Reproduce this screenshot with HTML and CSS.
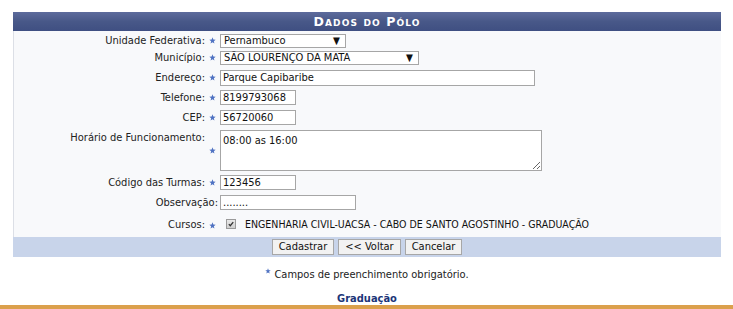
FILE: index.html
```html
<!DOCTYPE html>
<html lang="pt-BR">
<head>
<meta charset="utf-8">
<title>Dados do Pólo</title>
<link rel="stylesheet" href="styles.css">
</head>
<body>
<div class="page">
  <form class="form-box">
    <div class="caption">Dados do Pólo</div>
    <div class="fields">
      <label class="lbl">Unidade Federativa:</label>
      <span class="req"><svg viewBox="0 0 10 10"><path d="M5 0.5 6.2 3.6 9.5 3.8 6.9 5.9 7.8 9.2 5 7.4 2.2 9.2 3.1 5.9 0.5 3.8 3.8 3.6Z"/></svg></span>
      <div class="ctl"><span class="select w-uf"><span>Pernambuco</span><span class="arrow">▼</span></span></div>

      <label class="lbl">Município:</label>
      <span class="req"><svg viewBox="0 0 10 10"><path d="M5 0.5 6.2 3.6 9.5 3.8 6.9 5.9 7.8 9.2 5 7.4 2.2 9.2 3.1 5.9 0.5 3.8 3.8 3.6Z"/></svg></span>
      <div class="ctl"><span class="select w-mun"><span>SÃO LOURENÇO DA MATA</span><span class="arrow">▼</span></span></div>

      <label class="lbl">Endereço:</label>
      <span class="req"><svg viewBox="0 0 10 10"><path d="M5 0.5 6.2 3.6 9.5 3.8 6.9 5.9 7.8 9.2 5 7.4 2.2 9.2 3.1 5.9 0.5 3.8 3.8 3.6Z"/></svg></span>
      <div class="ctl"><input class="txt w-end tall" type="text" value="Parque Capibaribe"></div>

      <label class="lbl">Telefone:</label>
      <span class="req"><svg viewBox="0 0 10 10"><path d="M5 0.5 6.2 3.6 9.5 3.8 6.9 5.9 7.8 9.2 5 7.4 2.2 9.2 3.1 5.9 0.5 3.8 3.8 3.6Z"/></svg></span>
      <div class="ctl"><input class="txt w-sm" type="text" value="8199793068"></div>

      <label class="lbl">CEP:</label>
      <span class="req"><svg viewBox="0 0 10 10"><path d="M5 0.5 6.2 3.6 9.5 3.8 6.9 5.9 7.8 9.2 5 7.4 2.2 9.2 3.1 5.9 0.5 3.8 3.8 3.6Z"/></svg></span>
      <div class="ctl"><input class="txt w-sm" type="text" value="56720060"></div>

      <label class="lbl top">Horário de Funcionamento:</label>
      <span class="req"><svg viewBox="0 0 10 10"><path d="M5 0.5 6.2 3.6 9.5 3.8 6.9 5.9 7.8 9.2 5 7.4 2.2 9.2 3.1 5.9 0.5 3.8 3.8 3.6Z"/></svg></span>
      <div class="ctl"><textarea class="area">08:00 as 16:00</textarea></div>

      <label class="lbl">Código das Turmas:</label>
      <span class="req"><svg viewBox="0 0 10 10"><path d="M5 0.5 6.2 3.6 9.5 3.8 6.9 5.9 7.8 9.2 5 7.4 2.2 9.2 3.1 5.9 0.5 3.8 3.8 3.6Z"/></svg></span>
      <div class="ctl"><input class="txt w-sm" type="text" value="123456"></div>

      <label class="lbl obs">Observação:</label>
      <div class="ctl"><input class="txt w-obs" type="text" value="........"></div>

      <label class="lbl">Cursos:</label>
      <span class="req cursos-req"><svg viewBox="0 0 10 10"><path d="M5 0.5 6.2 3.6 9.5 3.8 6.9 5.9 7.8 9.2 5 7.4 2.2 9.2 3.1 5.9 0.5 3.8 3.8 3.6Z"/></svg></span>
      <div class="ctl cursos-ctl">
        <span class="check"><svg viewBox="0 0 10 10"><path d="M2.3 5.2 4.1 7.2 7.8 2.6" /></svg></span>
        <span class="curso">ENGENHARIA CIVIL-UACSA - CABO DE SANTO AGOSTINHO - GRADUAÇÃO</span>
      </div>
    </div>
    <div class="actions">
      <button type="button" class="btn">Cadastrar</button>
      <button type="button" class="btn">&lt;&lt; Voltar</button>
      <button type="button" class="btn">Cancelar</button>
    </div>
  </form>
  <p class="note"><span class="req small"><svg viewBox="0 0 10 10"><path d="M5 0.5 6.2 3.6 9.5 3.8 6.9 5.9 7.8 9.2 5 7.4 2.2 9.2 3.1 5.9 0.5 3.8 3.8 3.6Z"/></svg></span>Campos de preenchimento obrigatório.</p>
  <h2 class="section">Graduação</h2>
</div>
<div class="rule"></div>
</body>
</html>
```

FILE: styles.css
```css
html, body {
  margin: 0;
  padding: 0;
  background: #ffffff;
}
body {
  font-family: "DejaVu Sans Condensed", "DejaVu Sans", sans-serif;
  font-stretch: condensed;
  font-size: 11px;
  color: #222;
  width: 733px;
  height: 309px;
  overflow: hidden;
}
.page {
  padding: 12px 12px 0 13px;
}
.form-box {
  width: 708px;
  margin: 0;
}
.caption {
  height: 19px;
  line-height: 20px;
  background: linear-gradient(#5d6b9c, #485888 50%, #3f4f82);
  color: #fff;
  font-family: "DejaVu Sans", sans-serif;
  font-stretch: normal;
  font-weight: bold;
  font-variant: small-caps;
  font-size: 12.5px;
  letter-spacing: 1.1px;
  text-align: center;
}
.fields {
  background: #f8f9fb;
  border-left: 1px solid #dcdfe6;
  display: grid;
  grid-template-columns: 191px 15px 1fr;
  grid-template-rows: 17px 17px 23px 16px 24px 42px 22px 18px 26px;
  padding: 1px 0 0;
  align-items: center;
}
.lbl {
  text-align: right;
  white-space: nowrap;
  color: #222;
}
.lbl.top {
  align-self: start;
  padding-top: 2px;
}
.lbl.obs {
  grid-column: 1 / 3;
  padding-right: 2px;
}
.req {
  display: flex;
  justify-content: center;
  align-items: center;
}
.req svg {
  width: 7px;
  height: 7px;
  fill: #4f72c2;
}
.ctl {
  display: flex;
  align-items: center;
}
.select {
  box-sizing: border-box;
  height: 14px;
  border: 1px solid #a6a6a6;
  background: #fff;
  display: flex;
  justify-content: space-between;
  align-items: center;
  padding: 0 5px 0 3px;
  color: #111;
  line-height: 12px;
}
.arrow {
  font-size: 10px;
  color: #111;
}
.w-uf { width: 126px; }
.w-mun { width: 199px; }
.txt {
  box-sizing: border-box;
  height: 15px;
  border: 1px solid #a6a6a6;
  background: #fff;
  padding: 0 2px;
  margin: 0;
  font: inherit;
  color: #111;
}
.txt.tall { height: 16px; }
.w-end { width: 315px; }
.w-sm { width: 76px; }
.w-obs { width: 136px; }
.area {
  box-sizing: border-box;
  width: 322px;
  height: 41px;
  border: 1px solid #a6a6a6;
  background: #fff;
  margin: 0;
  padding: 3px 2px;
  font: inherit;
  color: #111;
  resize: both;
}
.cursos-req {
  padding-top: 2px;
}
.cursos-ctl {
  gap: 9px;
  padding-left: 6px;
}
.check {
  box-sizing: border-box;
  width: 10px;
  height: 10px;
  border: 1px solid #9a9a9a;
  background: linear-gradient(#e8e8e8, #cfcfcf);
  display: flex;
}
.check svg {
  width: 8px;
  height: 8px;
  fill: none;
  stroke: #333;
  stroke-width: 1.6;
}
.curso {
  font-size: 10.5px;
  color: #111;
}
.actions {
  background: #c8d4ea;
  height: 20px;
  display: flex;
  justify-content: center;
  align-items: center;
  gap: 4px;
}
.btn {
  font: inherit;
  font-size: 11px;
  color: #111;
  background: #f2f2f2;
  border: 1px solid #a7a7a7;
  height: 16px;
  padding: 0 6px;
  line-height: 14px;
  margin: 0;
}
.note {
  margin: 11px 0 0;
  text-align: center;
  font-size: 11px;
  line-height: 13px;
  color: #222;
}
.req.small {
  display: inline-block;
  vertical-align: top;
  line-height: 6px;
  margin-right: 3px;
}
.req.small svg {
  width: 6px;
  height: 6px;
}
.section {
  margin: 11px 0 0;
  text-align: center;
  font-size: 11px;
  font-weight: bold;
  color: #1c3578;
  line-height: 13px;
}
.rule {
  height: 4px;
  background: #dba04c;
  margin-top: 0;
}
```
